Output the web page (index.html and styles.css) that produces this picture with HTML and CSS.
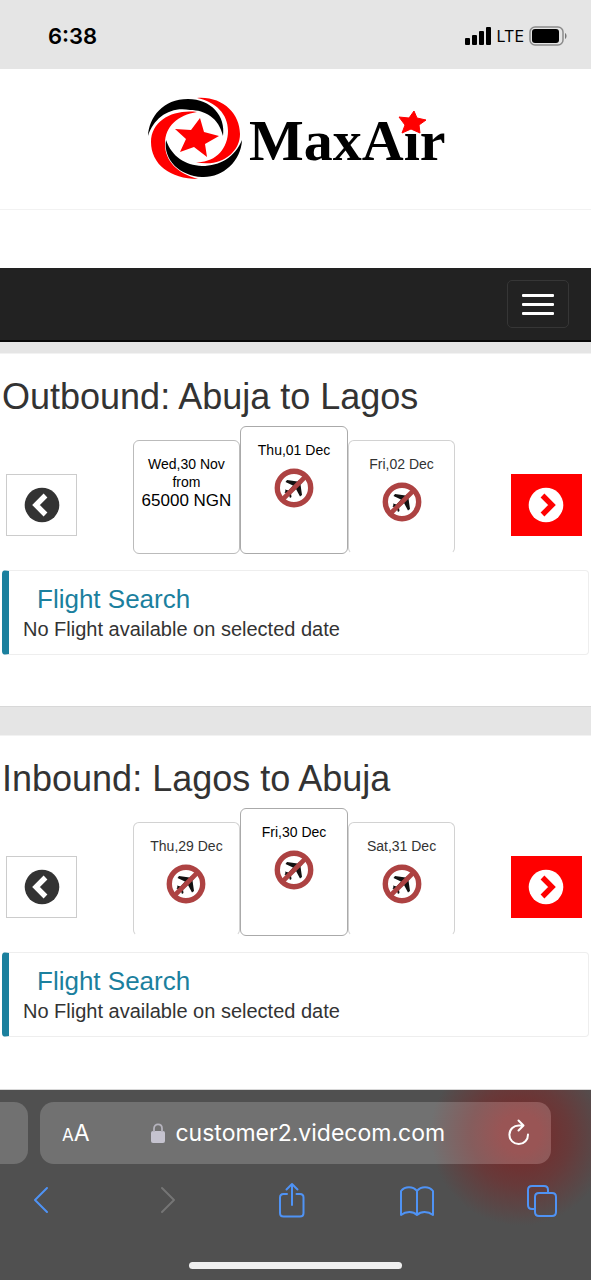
FILE: index.html
```html
<!DOCTYPE html>
<html lang="en">
<head>
<meta charset="utf-8">
<meta name="viewport" content="width=device-width, initial-scale=1">
<title>MaxAir</title>
<link rel="stylesheet" href="styles.css">
</head>
<body>
<svg class="defs" aria-hidden="true">
  <symbol id="no-flight" viewBox="0 0 40 40">
    <path fill="#111" d="M28 12C29.500 13.500 27.500 15.500 26.500 16.500L28 27L26 28.500L22 21L17 25.500L17.500 29L16 30L14.500 26L10.500 24.500L11.500 23L11 21.500L14.500 22.500L19 17.500L11.500 14L13 12L23.500 13.500C25 12 26.500 10.500 28 12Z"/>
    <circle cx="20" cy="20" r="16.700" fill="none" stroke="#ad4242" stroke-width="5.400"/>
    <path d="M8.500 31.500 31.500 8.500" stroke="#ad4242" stroke-width="4.600"/>
  </symbol>
  <symbol id="circle-left" viewBox="0 0 36 36">
    <circle cx="18" cy="18" r="17.300" fill="#333"/>
    <path d="M21.500 8.500 12 18l9.500 9.500" fill="none" stroke="#fff" stroke-width="5.400"/>
  </symbol>
  <symbol id="circle-right" viewBox="0 0 36 36">
    <circle cx="18" cy="18" r="17.300" fill="#fff"/>
    <path d="M14.500 8.500 24 18l-9.500 9.500" fill="none" stroke="#f00" stroke-width="5.400"/>
  </symbol>
</svg>

<div class="status-bar">
  <span class="clock">6:38</span>
  <div class="status-icons">
    <svg width="28" height="18" viewBox="0 0 28 18"><rect x="1" y="11" width="5" height="7" rx="1"/><rect x="8" y="8" width="5" height="10" rx="1"/><rect x="15" y="4" width="5" height="14" rx="1"/><rect x="22" y="0" width="5" height="18" rx="1"/></svg>
    <span class="carrier">LTE</span>
    <svg width="38" height="20" viewBox="0 0 38 20"><rect x="1" y="1" width="33" height="18" rx="5" fill="none" stroke="#8b8b8b" stroke-width="1.500"/><rect x="3" y="3" width="27" height="14" rx="3"/><path d="M36 7c2 1 2 5 0 6z" fill="#777"/></svg>
  </div>
</div>

<header class="brand">
  <svg width="300" height="88" viewBox="146 95 300 88" role="img" aria-label="MaxAir">
    <path d="M148 136C149 117 163 99 188 99C211 99 226 116 223 136C219 118 205 110 190 110C171 106 154 117 148 136Z" fill="#000"/>
    <path d="M197 98C222 96 240 113 240 134C240 153 220 168 196 162C216 163 228 148 228 131C228 114 216 102 197 98Z" fill="#f00"/>
    <path d="M197 112C174 109 151 120 151 142C151 164 170 179 198 179C177 173 165 161 165 144C165 126 178 115 197 112Z" fill="#f00"/>
    <path d="M166 140C172 157 185 165 202 166C220 166 235 157 242 140C241 162 222 178 202 177C180 176 163 160 166 140Z" fill="#000"/>
    <path d="M200 118 204 132 219 136 205 144 207 157 194 147 180 152 186 139 175 129 191 130Z" fill="#f00"/>
    <text class="wordmark" x="249" y="160">MaxAir</text>
    <path d="M414 111 417 118 426 120 419 125 420 133 411 129 402 133 405 125 399 117 409 118Z" fill="#f00" stroke="#f00"/>
  </svg>
</header>

<nav class="navbar">
  <button class="menu-button" type="button" aria-label="Menu"><span class="menu-line"></span><span class="menu-line"></span><span class="menu-line"></span></button>
</nav>

<main class="journeys">
  <section class="journey">
    <h1 class="journey-title">Outbound: Abuja to Lagos</h1>
    <div class="date-row">
      <button class="step" type="button" aria-label="Previous dates"><svg class="step-icon"><use href="#circle-left"/></svg></button>
      <div class="dates">
        <button class="date bookable" type="button"><span>Wed,30 Nov</span><span>from</span><span class="fare">65000 NGN</span></button>
        <button class="date selected" type="button"><span>Thu,01 Dec</span><svg class="no-flight"><use href="#no-flight"/></svg></button>
        <button class="date" type="button"><span>Fri,02 Dec</span><svg class="no-flight"><use href="#no-flight"/></svg></button>
      </div>
      <button class="step step-next" type="button" aria-label="Next dates"><svg class="step-icon"><use href="#circle-right"/></svg></button>
    </div>
    <div class="notice">
      <h2 class="notice-title">Flight Search</h2>
      <p class="notice-text">No Flight available on selected date</p>
    </div>
  </section>

  <section class="journey">
    <h1 class="journey-title">Inbound: Lagos to Abuja</h1>
    <div class="date-row">
      <button class="step" type="button" aria-label="Previous dates"><svg class="step-icon"><use href="#circle-left"/></svg></button>
      <div class="dates">
        <button class="date" type="button"><span>Thu,29 Dec</span><svg class="no-flight"><use href="#no-flight"/></svg></button>
        <button class="date selected" type="button"><span>Fri,30 Dec</span><svg class="no-flight"><use href="#no-flight"/></svg></button>
        <button class="date" type="button"><span>Sat,31 Dec</span><svg class="no-flight"><use href="#no-flight"/></svg></button>
      </div>
      <button class="step step-next" type="button" aria-label="Next dates"><svg class="step-icon"><use href="#circle-right"/></svg></button>
    </div>
    <div class="notice">
      <h2 class="notice-title">Flight Search</h2>
      <p class="notice-text">No Flight available on selected date</p>
    </div>
  </section>
</main>

<footer class="browser">
  <div class="tabs">
    <div class="previous-tab"></div>
    <div class="address-bar">
      <button class="plain text-size" type="button"><span class="small-a">A</span>A</button>
      <button class="plain address" type="button">
        <svg width="14" height="20" viewBox="0 0 14 20"><rect x="0" y="8" width="14" height="12" rx="2" fill="#c5c3cf"/><path d="M3 9V5.500C3 0 11 0 11 5.500V9" fill="none" stroke="#b5b3bd" stroke-width="1.800"/></svg>
        <span>customer2.videcom.com</span>
      </button>
      <button class="plain reload" type="button" aria-label="Reload"><svg width="24" height="28" viewBox="0 0 24 28" fill="none" stroke="#fff" stroke-width="2" stroke-linecap="round" stroke-linejoin="round"><path d="M21 15.500A9.300 9.300 0 1 1 12 6.500H16M11.500 1.500 16.500 6.500 11.500 11.500"/></svg></button>
    </div>
  </div>
  <div class="toolbar">
    <button class="plain tool" type="button" aria-label="Back"><svg width="36" height="36" viewBox="0 0 36 36"><path d="M24 6 12 18 24 30"/></svg></button>
    <button class="plain tool disabled" type="button" aria-label="Forward" disabled><svg width="36" height="36" viewBox="0 0 36 36"><path d="M13 6 25 18 13 30"/></svg></button>
    <button class="plain tool" type="button" aria-label="Share"><svg width="36" height="36" viewBox="0 0 36 36"><path d="M13 12H9.500Q6 12 6 15.500V31Q6 34.500 9.500 34.500H26Q29.500 34.500 29.500 31V15.500Q29.500 12 26 12H22.500M18 23V2M12.500 7.500 18 2 23.500 7.500"/></svg></button>
    <button class="plain tool" type="button" aria-label="Bookmarks"><svg width="36" height="36" viewBox="0 0 36 36"><path d="M17 9V33C13 29 6 29 1 33V9C5 4 13 4 17 9C21 4 29 4 33 9V33C28 29 21 29 17 33"/></svg></button>
    <button class="plain tool" type="button" aria-label="Tabs"><svg width="36" height="36" viewBox="0 0 36 36"><path d="M10 27H7Q3 27 3 23V8Q3 4 7 4H19Q23 4 23 8V11M14 11H27Q31 11 31 15V30Q31 34 27 34H14Q10 34 10 30V15Q10 11 14 11Z"/></svg></button>
  </div>
  <div class="home-indicator"></div>
</footer>
</body>
</html>
```
FILE: styles.css
```css
* {
  box-sizing: border-box;
}

body {
  margin: 0;
  min-height: 100vh;
  display: flex;
  flex-direction: column;
  background: #fff;
  color: #333;
  font-family: "Liberation Sans", Arial, sans-serif;
}

button {
  font-family: inherit;
  cursor: pointer;
}

.defs {
  display: none;
}

.status-bar {
  display: flex;
  justify-content: space-between;
  align-items: center;
  height: 69px;
  padding: 3px 24px 0 48px;
  background: #e5e5e5;
  color: #000;
  font-family: Inter, sans-serif;
}

.clock {
  font-size: 22px;
  font-weight: 600;
}

.status-icons {
  display: flex;
  align-items: center;
  gap: 5px;
}

.carrier {
  font-size: 16px;
}

.brand {
  height: 141px;
  padding-top: 26px;
  border-bottom: 1px solid #f2f2f2;
  text-align: center;
}

.wordmark {
  font-family: "Liberation Serif", serif;
  font-size: 58px;
  font-weight: 700;
  fill: #000;
}

.navbar {
  display: flex;
  justify-content: flex-end;
  align-items: center;
  height: 74px;
  margin-top: 58px;
  padding-right: 22px;
  background: #222;
  border-bottom: 2px solid #080808;
}

.menu-button {
  display: flex;
  flex-direction: column;
  justify-content: center;
  gap: 6px;
  width: 62px;
  height: 48px;
  padding: 0 14px;
  background: transparent;
  border: 1px solid #363636;
  border-radius: 5px;
}

.menu-line {
  height: 3px;
  border-radius: 1px;
  background: #fff;
}

.journeys {
  display: flex;
  flex-direction: column;
  flex: 1;
  gap: 28px;
  padding-top: 11px;
  background: #e5e5e5;
}

.journey {
  padding: 22px 2px 51px;
  background: #fff;
  border-top: 1px solid #f2f2f2;
  border-bottom: 1px solid #d8d8d8;
}

.journey:last-child {
  flex: 1;
}

.journey-title {
  margin: 0 0 8px;
  font-size: 36px;
  font-weight: 400;
  line-height: 42px;
}

.date-row {
  display: flex;
  justify-content: space-between;
  align-items: flex-end;
  height: 128px;
  padding: 0 7px 0 4px;
}

.step {
  display: flex;
  justify-content: center;
  align-items: center;
  width: 71px;
  height: 62px;
  margin-bottom: 18px;
  padding: 0;
  background: #fff;
  border: 1px solid #ccc;
}

.step-next {
  background: #f00;
  border-color: #f00;
}

.step-icon {
  width: 36px;
  height: 36px;
}

.dates {
  display: grid;
  grid-template-columns: repeat(3, 1fr);
  align-items: end;
  width: 56%;
  max-width: 400px;
}

.date {
  display: flex;
  flex-direction: column;
  align-items: center;
  height: 114px;
  padding: 14px 0 0;
  background: #fff;
  border: 1px solid #d2d2d2;
  border-bottom-color: transparent;
  border-radius: 6px;
  color: #333;
  font-size: 14px;
  line-height: 18px;
  white-space: nowrap;
}

.bookable {
  border-color: #bbb;
  color: #000;
}

.selected {
  height: 128px;
  border-color: #aaa;
  color: #000;
}

.fare {
  font-size: 17px;
  line-height: 20px;
}

.no-flight {
  width: 40px;
  height: 40px;
  margin-top: 9px;
}

.notice {
  margin-top: 16px;
  padding: 13px 14px;
  border: 1px solid #eee;
  border-left: 7px solid #1b809e;
  border-radius: 4px;
}

.notice-title {
  margin: 0 0 3px 14px;
  color: #1b809e;
  font-size: 26px;
  font-weight: 400;
  line-height: 30px;
}

.notice-text {
  margin: 0;
  font-size: 20px;
  line-height: 24px;
}

.browser {
  display: flex;
  flex-direction: column;
  align-items: center;
  height: 190px;
  padding: 12px 0 11px;
  background: radial-gradient(circle at 88% 24%, #6f3232 30px, #673a3a 50px, #505050 90px);
  color: #fff;
  font-family: Inter, sans-serif;
}

.tabs {
  display: flex;
  gap: 12px;
  width: 100%;
  height: 62px;
  padding-right: 40px;
}

.previous-tab {
  width: 28px;
  background: #717171;
  border-radius: 0 14px 14px 0;
}

.address-bar {
  display: flex;
  flex: 1;
  justify-content: space-between;
  align-items: center;
  padding: 0 20px 0 22px;
  background: radial-gradient(circle at 94% 50%, #995555 20px, #855d5d 50px, #717171 90px);
  border-radius: 14px;
}

.plain {
  padding: 0;
  background: none;
  border: 0;
  color: #fff;
}

.text-size {
  font-size: 23px;
}

.small-a {
  font-size: 17px;
}

.address {
  display: flex;
  align-items: center;
  gap: 10px;
  font-size: 23px;
}

.reload,
.tool {
  display: flex;
}

.toolbar {
  display: flex;
  justify-content: space-between;
  width: 100%;
  margin-top: 18px;
  padding: 0 30px 0 23px;
}

.tool {
  fill: none;
  stroke: #4f93f5;
  stroke-width: 2;
  stroke-linecap: round;
  stroke-linejoin: round;
}

.disabled {
  stroke: #757575;
}

.home-indicator {
  width: 36%;
  height: 7px;
  margin-top: auto;
  background: #efefef;
  border-radius: 4px;
}
```
